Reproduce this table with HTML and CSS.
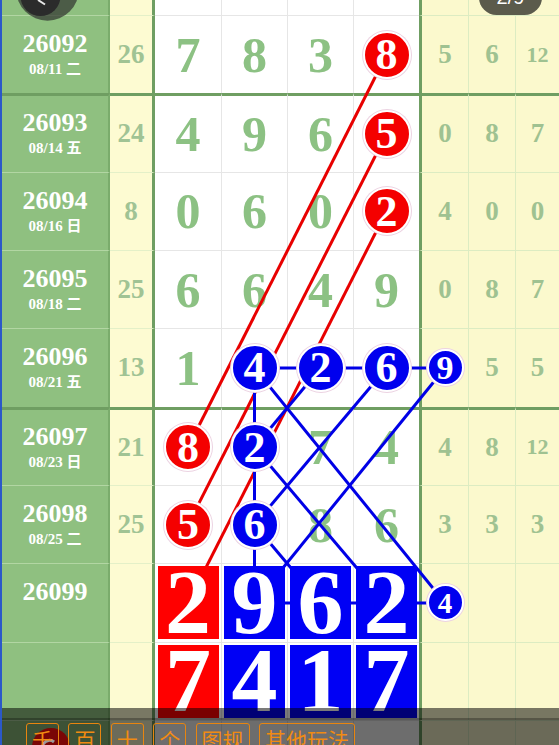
FILE: index.html
```html
<!DOCTYPE html>
<html lang="zh">
<head>
<meta charset="utf-8">
<link rel="stylesheet" href="styles.css">
</head>
<body>
<div class="page">
  <div class="board">
    <div class="row strip">
      <div class="c id"></div><div class="c sum"></div>
      <div class="c w"></div><div class="c w"></div><div class="c w"></div><div class="c w"></div>
      <div class="c y first"></div><div class="c y"></div><div class="c y"></div>
    </div>
    <div class="row">
      <div class="c id"><div class="no">26092</div><div class="dt">08/11 二</div></div>
      <div class="c sum">26</div>
      <div class="c w">7</div><div class="c w">8</div><div class="c w">3</div>
      <div class="c w"><span class="ball red">8</span></div>
      <div class="c y first">5</div><div class="c y">6</div><div class="c y sm">12</div>
    </div>
    <div class="row thick">
      <div class="c id"><div class="no">26093</div><div class="dt">08/14 五</div></div>
      <div class="c sum">24</div>
      <div class="c w">4</div><div class="c w">9</div><div class="c w">6</div>
      <div class="c w"><span class="ball red">5</span></div>
      <div class="c y first">0</div><div class="c y">8</div><div class="c y">7</div>
    </div>
    <div class="row">
      <div class="c id"><div class="no">26094</div><div class="dt">08/16 日</div></div>
      <div class="c sum">8</div>
      <div class="c w">0</div><div class="c w">6</div><div class="c w">0</div>
      <div class="c w"><span class="ball red">2</span></div>
      <div class="c y first">4</div><div class="c y">0</div><div class="c y">0</div>
    </div>
    <div class="row">
      <div class="c id"><div class="no">26095</div><div class="dt">08/18 二</div></div>
      <div class="c sum">25</div>
      <div class="c w">6</div><div class="c w">6</div><div class="c w">4</div><div class="c w">9</div>
      <div class="c y first">0</div><div class="c y">8</div><div class="c y">7</div>
    </div>
    <div class="row">
      <div class="c id"><div class="no">26096</div><div class="dt">08/21 五</div></div>
      <div class="c sum">13</div>
      <div class="c w">1</div>
      <div class="c w"><span class="ball blue">4</span></div>
      <div class="c w"><span class="ball blue">2</span></div>
      <div class="c w"><span class="ball blue">6</span></div>
      <div class="c y first"><span class="ball blue s">9</span></div><div class="c y">5</div><div class="c y">5</div>
    </div>
    <div class="row thick">
      <div class="c id"><div class="no">26097</div><div class="dt">08/23 日</div></div>
      <div class="c sum">21</div>
      <div class="c w"><span class="ball red">8</span></div>
      <div class="c w"><span class="ball blue">2</span></div>
      <div class="c w">7</div><div class="c w">4</div>
      <div class="c y first">4</div><div class="c y">8</div><div class="c y sm">12</div>
    </div>
    <div class="row">
      <div class="c id"><div class="no">26098</div><div class="dt">08/25 二</div></div>
      <div class="c sum">25</div>
      <div class="c w"><span class="ball red">5</span></div>
      <div class="c w"><span class="ball blue">6</span></div>
      <div class="c w">8</div><div class="c w">6</div>
      <div class="c y first">3</div><div class="c y">3</div><div class="c y">3</div>
    </div>
    <div class="row">
      <div class="c id"><div class="no">26099</div><div class="dt">&nbsp;</div></div>
      <div class="c sum"></div>
      <div class="c w"><span class="sq red">2</span></div>
      <div class="c w"><span class="sq">9</span></div>
      <div class="c w"><span class="sq">6</span></div>
      <div class="c w"><span class="sq">2</span></div>
      <div class="c y first"><span class="ball blue s xs">4</span></div><div class="c y"></div><div class="c y"></div>
    </div>
    <div class="row">
      <div class="c id"></div>
      <div class="c sum"></div>
      <div class="c w"><span class="sq red">7</span></div>
      <div class="c w"><span class="sq">4</span></div>
      <div class="c w"><span class="sq">1</span></div>
      <div class="c w"><span class="sq">7</span></div>
      <div class="c y first"></div><div class="c y"></div><div class="c y"></div>
    </div>
    <div class="row">
      <div class="c id"></div><div class="c sum"></div>
      <div class="c w"></div><div class="c w"></div><div class="c w"></div><div class="c w"></div>
      <div class="c y first"></div><div class="c y"></div><div class="c y"></div>
    </div>
  </div>

  <svg class="links" width="559" height="745" viewBox="0 0 559 745">
    <g stroke="#e80000" stroke-width="3" fill="none">
      <line x1="386.5" y1="54.7" x2="188" y2="447.3"/>
      <line x1="386.5" y1="134" x2="188" y2="524.7"/>
      <line x1="386.5" y1="211.3" x2="188" y2="603"/>
    </g>
    <g stroke="#0000e6" stroke-width="3" fill="none">
      <line x1="254.5" y1="368" x2="445" y2="368"/>
      <line x1="254.5" y1="368" x2="254.5" y2="603"/>
      <line x1="320.5" y1="368" x2="254.5" y2="447.3"/>
      <line x1="386.5" y1="368" x2="254.5" y2="524.7"/>
      <line x1="445" y1="368" x2="254.5" y2="603"/>
      <line x1="254.5" y1="368" x2="445" y2="603"/>
      <line x1="254.5" y1="447.3" x2="386.5" y2="603"/>
      <line x1="254.5" y1="524.7" x2="320.5" y2="603"/>
      <line x1="254.5" y1="603" x2="445" y2="603"/>
    </g>
  </svg>

  <svg class="back" width="90" height="30" viewBox="0 0 90 30">
    <circle cx="47.5" cy="-10.6" r="31.3" fill="rgba(50,52,48,0.72)"/>
    <circle cx="40.5" cy="-4" r="20" fill="#2b2b2b"/>
    <line x1="38" y1="0" x2="45" y2="4.5" stroke="#e8e8e8" stroke-width="2"/>
  </svg>

  <div class="pager">2/9</div>

  <div class="toolbar">
    <div class="tb-top"></div>
    <div class="tb-bar">
      <span class="fab"><svg width="38" height="38" viewBox="0 0 38 38"><path d="M22 14 A7 7 0 1 0 24 22" stroke="#9a9a9a" stroke-width="3" fill="none"/></svg></span>
      <span class="btn">千</span>
      <span class="btn">百</span>
      <span class="btn">十</span>
      <span class="btn">个</span>
      <span class="btn">图规</span>
      <span class="btn">其他玩法</span>
    </div>
  </div>
</div>
</body>
</html>
```

FILE: styles.css
```css
html, body {
  margin: 0;
  padding: 0;
  background: #fff;
  overflow: hidden;
}

.page {
  position: relative;
  width: 559px;
  height: 745px;
  overflow: hidden;
  box-sizing: border-box;
  border-left: 2px solid #2b58c9;
}

.board {
  display: flex;
  flex-direction: column;
}

.row {
  display: grid;
  grid-template-columns: 108px 45px 66px 66px 66px 66px 49px 47px 1fr;
  height: 78.33px;
  flex: none;
}

.row.strip {
  height: 15px;
}

.c {
  display: flex;
  align-items: center;
  justify-content: center;
  box-sizing: border-box;
  min-width: 0;
  border-top: 1px solid transparent;
  font-family: "Liberation Serif", "Noto Sans CJK SC", serif;
  font-weight: bold;
  line-height: 1;
}

.strip .c {
  border-top: 0;
}

.id {
  background: #8fc080;
  border-top-color: #b2d6a3;
  border-right: 2px solid #7aac6c;
  flex-direction: column;
  color: #fff;
}

.no {
  font-size: 26px;
  line-height: 28px;
}

.dt {
  font-size: 15px;
  line-height: 20px;
  margin-top: 1px;
}

.sum {
  background: #fdfbd2;
  border-top-color: #e4f0c8;
  border-right: 3px solid #6f9e62;
  color: #a0c394;
  font-size: 27px;
}

.w {
  background: #fff;
  border-top-color: #e6e6e6;
  color: #8cc183;
  font-size: 50px;
}

.w + .w {
  border-left: 1px solid #e6e6e6;
}

.y {
  background: #fbf9cd;
  border-top-color: #dcecc2;
  border-left: 1px solid #dcecc2;
  color: #9fc291;
  font-size: 27px;
}

.y.first {
  border-left: 3px solid #6f9e62;
}

.y.sm {
  font-size: 22px;
}

.row.thick .c {
  border-top: 3px solid #6f9e62;
}

.ball {
  position: relative;
  z-index: 2;
  box-sizing: border-box;
  width: 48px;
  height: 48px;
  border-radius: 50%;
  border: 2px solid #fff;
  box-shadow: 0 0 0 1px #ecd3e2;
  display: flex;
  align-items: center;
  justify-content: center;
  color: #fff;
  font-size: 44px;
  line-height: 0.9;
}

.ball.red {
  background: #f40000;
}

.ball.blue {
  background: #0000ee;
}

.ball.s {
  width: 37px;
  height: 37px;
  font-size: 34px;
}

.ball.xs {
  font-size: 29px;
}

.sq {
  position: relative;
  z-index: 2;
  width: 61px;
  height: 73px;
  background: #0000f5;
  color: #fff;
  display: flex;
  align-items: center;
  justify-content: center;
  font-size: 92px;
  line-height: 0.78;
}

.sq.red {
  background: #ff0000;
}

.links {
  position: absolute;
  left: -2px;
  top: 0;
  z-index: 1;
}

.back {
  position: absolute;
  left: -2px;
  top: 0;
  z-index: 6;
}

.pager {
  position: absolute;
  left: 477px;
  top: -20px;
  width: 63px;
  height: 35px;
  border-radius: 17.5px;
  background: #5b5b4c;
  color: #fff;
  font-family: "Liberation Sans", sans-serif;
  font-size: 20px;
  line-height: 35px;
  text-align: center;
  z-index: 6;
}

.toolbar {
  position: absolute;
  left: -2px;
  top: 708px;
  width: 559px;
  height: 37px;
  background: rgba(0, 0, 0, 0.52);
  z-index: 5;
  display: flex;
  flex-direction: column;
}

.tb-top {
  height: 10px;
  border-bottom: 2px solid rgba(0, 0, 0, 0.28);
  flex: none;
}

.tb-bar {
  position: relative;
  flex: 1;
  background: rgba(0, 0, 0, 0.1);
  display: flex;
  align-items: flex-start;
  gap: 9.4px;
  padding: 3px 0 0 26px;
}

.fab {
  position: absolute;
  left: 32px;
  top: 8px;
  width: 38px;
  height: 38px;
  border-radius: 50%;
  background: #7a0606;
}

.fab svg {
  display: block;
}

.btn {
  position: relative;
  z-index: 1;
  box-sizing: border-box;
  height: 32px;
  padding: 2px 5px 0;
  border: 1px solid #e8850f;
  border-radius: 3px;
  color: #f18b12;
  font-family: "Noto Sans CJK SC", sans-serif;
  font-size: 21px;
  line-height: 26px;
  white-space: nowrap;
}
```
